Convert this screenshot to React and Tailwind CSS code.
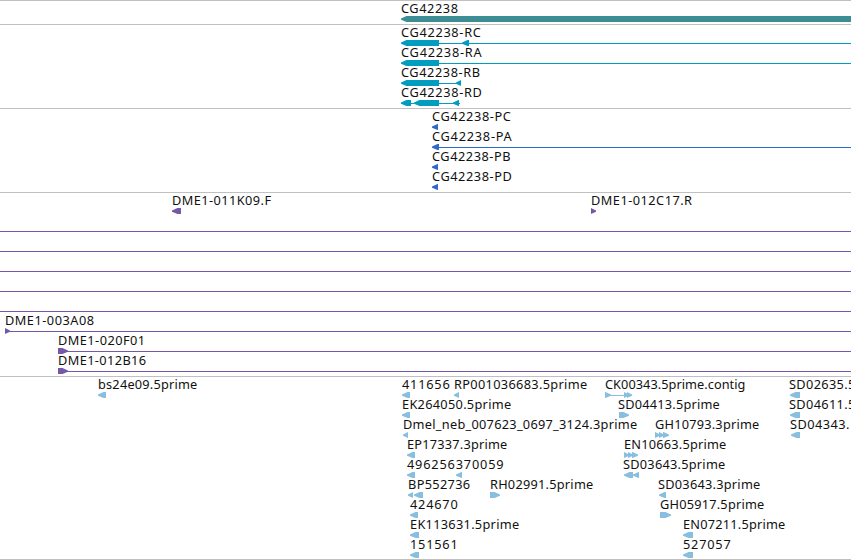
import { useLayoutEffect, useRef } from "react";

// Label: [x, text, drawn width]
// Shape: ["l" | "r" | "-", start, end]; arrows point left or right, "-" is a connector
const tracks = [
  {
    color: "#3d8d95",
    pad: "pb-[3px]",
    lanes: [{ labels: [[401, "CG42238", 57.5]], shapes: [["l", 401, 852]] }],
  },
  {
    color: "#009dbf",
    pad: "pb-[3px]",
    lanes: [
      { labels: [[401, "CG42238-RC", 80.5]], shapes: [["l", 401, 439], ["-", 439, 851], ["l", 462, 469]] },
      { labels: [[401, "CG42238-RA", 81.5]], shapes: [["l", 401, 439], ["-", 439, 851]] },
      { labels: [[401, "CG42238-RB", 79.5]], shapes: [["l", 401, 439], ["-", 439, 456], ["l", 456, 461]] },
      { labels: [[401, "CG42238-RD", 81.5]], shapes: [["l", 401, 411], ["-", 411, 414], ["l", 414, 439], ["-", 439, 460], ["l", 453, 459]] },
    ],
  },
  {
    color: "#3068cc",
    pad: "pb-[3px]",
    lanes: [
      { labels: [[432, "CG42238-PC", 79.5]], shapes: [["l", 432, 438]] },
      { labels: [[432, "CG42238-PA", 80.5]], shapes: [["l", 432, 439], ["-", 438, 851]] },
      { labels: [[432, "CG42238-PB", 79]], shapes: [["l", 432, 438]] },
      { labels: [[432, "CG42238-PD", 80.5]], shapes: [["l", 432, 438]] },
    ],
  },
  {
    color: "#7558a8",
    pad: "pb-[3px]",
    lanes: [
      { labels: [[172, "DME1-011K09.F", 99.5], [591, "DME1-012C17.R", 101.5]], shapes: [["l", 172, 181], ["r", 591, 596]] },
      { labels: [], shapes: [["-", 0, 851]] },
      { labels: [], shapes: [["-", 0, 851]] },
      { labels: [], shapes: [["-", 0, 851]] },
      { labels: [], shapes: [["-", 0, 851]] },
      { labels: [], shapes: [["-", 0, 851]] },
      { labels: [[5, "DME1-003A08", 89.5]], shapes: [["r", 5, 10], ["-", 5, 851]] },
      { labels: [[58, "DME1-020F01", 87.5]], shapes: [["r", 58, 68], ["-", 60, 851]] },
      { labels: [[58, "DME1-012B16", 88.5]], shapes: [["r", 58, 68], ["-", 60, 851]] },
    ],
  },
  {
    color: "#88bfdf",
    pad: "pb-[2px]",
    lanes: [
      {
        labels: [[98, "bs24e09.5prime", 99.5], [402, "411656", 48.5], [454, "RP001036683.5prime", 133.5], [605, "CK00343.5prime.contig", 140.5], [789, "SD02635.5prime", 104]],
        shapes: [["l", 98, 106], ["l", 402, 410], ["l", 454, 459], ["r", 605, 611], ["-", 607, 626], ["r", 624, 629], ["r", 627, 632], ["l", 790, 800]],
      },
      { labels: [[402, "EK264050.5prime", 109.5], [618, "SD04413.5prime", 102], [789, "SD04611.5prime", 104]], shapes: [["l", 402, 410], ["r", 619, 629], ["l", 790, 800]] },
      { labels: [[403, "Dmel_neb_007623_0697_3124.3prime", 234.5], [655, "GH10793.3prime", 104.5], [790, "SD04343.", 60]], shapes: [["l", 403, 408], ["r", 655, 660], ["r", 659, 664], ["r", 663, 669], ["l", 791, 800]] },
      { labels: [[407, "EP17337.3prime", 100.5], [624, "EN10663.5prime", 102.5]], shapes: [["l", 407, 415], ["r", 624, 629], ["r", 628, 633], ["r", 632, 638]] },
      { labels: [[407, "496256370059", 97.5], [623, "SD03643.5prime", 102.5]], shapes: [["l", 407, 415], ["l", 456, 462], ["l", 624, 633], ["l", 633, 639]] },
      { labels: [[408, "BP552736", 62.5], [490, "RH02991.5prime", 103.5], [658, "SD03643.3prime", 102.5]], shapes: [["l", 408, 413], ["l", 414, 423], ["r", 490, 500], ["l", 659, 666]] },
      { labels: [[410, "424670", 48.5], [660, "GH05917.5prime", 104.5]], shapes: [["l", 410, 418], ["r", 660, 671]] },
      { labels: [[410, "EK113631.5prime", 109.5], [683, "EN07211.5prime", 102.5]], shapes: [["l", 410, 419], ["l", 683, 693]] },
      { labels: [[410, "151561", 48.5], [683, "527057", 48.5]], shapes: [["l", 410, 419], ["l", 683, 693]] },
    ],
  },
];

function Label({ x, text, width }) {
  const ref = useRef(null);

  // Tracks the glyphs out evenly so that the name spans its drawn width.
  useLayoutEffect(() => {
    const el = ref.current;
    el.style.letterSpacing = "0px";
    const natural = el.getBoundingClientRect().width;
    el.style.letterSpacing = `${(width - natural) / text.length}px`;
  }, [text, width]);

  return (
    <span
      ref={ref}
      className="absolute top-0 whitespace-nowrap font-['Noto_Sans',sans-serif] text-[12.75px] leading-[15px] text-[#111111]"
      style={{ left: x }}
    >
      {text}
    </span>
  );
}

function Shape({ kind, start, end }) {
  if (kind === "-") {
    return <rect x={start} y="18" width={end - start} height="1" />;
  }
  const head = Math.min(5.5, end - start);
  const points =
    kind === "l"
      ? `${start},17.4 ${start + head},15 ${end},15 ${end},21 ${start + head},21 ${start},18.8`
      : `${end},17.4 ${end - head},15 ${start},15 ${start},21 ${end - head},21 ${end},18.8`;
  return <polygon points={points} />;
}

function Lane({ lane, color }) {
  return (
    <div className="relative h-5 w-full">
      <svg className="block h-5 w-full overflow-visible" fill={color}>
        {lane.shapes.map(([kind, start, end], i) => (
          <Shape key={i} kind={kind} start={start} end={end} />
        ))}
      </svg>
      {lane.labels.map(([x, text, width]) => (
        <Label key={text} x={x} text={text} width={width} />
      ))}
    </div>
  );
}

export default function App() {
  return (
    <main className="flex h-[560px] w-[851px] flex-col overflow-hidden border-b border-[#c0c0c0] bg-white">
      {tracks.map((track) => (
        <section key={track.color} className={`shrink-0 border-t border-[#c0c0c0] ${track.pad}`}>
          {track.lanes.map((lane, i) => (
            <Lane key={i} lane={lane} color={track.color} />
          ))}
        </section>
      ))}
    </main>
  );
}
